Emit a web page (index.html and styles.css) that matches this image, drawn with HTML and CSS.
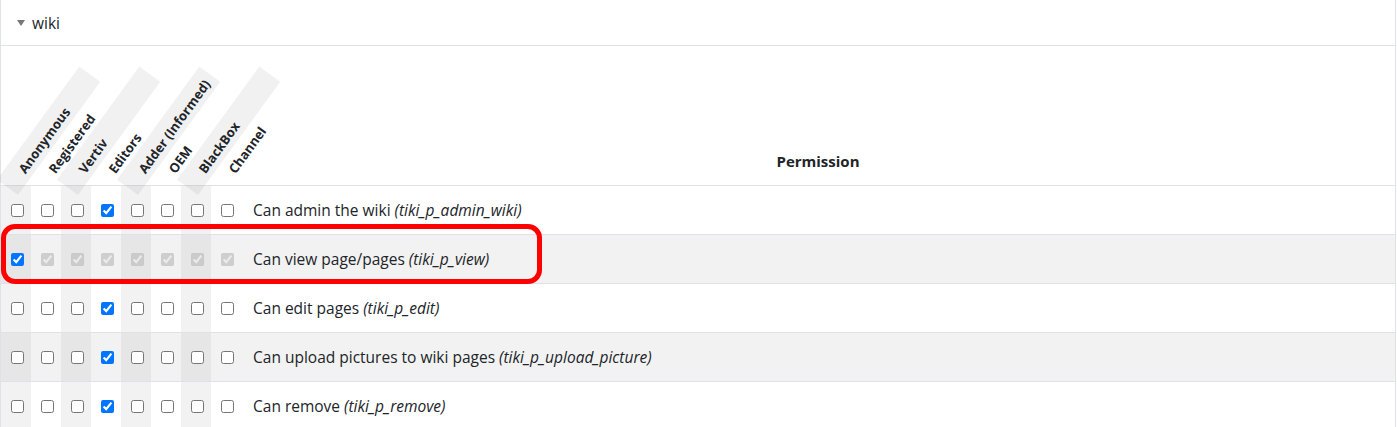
FILE: index.html
```html
<!DOCTYPE html>
<html lang="en">
<head>
<meta charset="utf-8">
<title>wiki permissions</title>
<link rel="stylesheet" href="styles.css">
</head>
<body>
<div class="panel">
  <div class="panel-head"><span class="caret"></span><span class="title">wiki</span></div>
  <table class="perms">
    <colgroup>
      <col class="c"><col class="c"><col class="c"><col class="c"><col class="c"><col class="c"><col class="c"><col class="c"><col>
    </colgroup>
    <thead>
      <tr>
        <th class="rot"><div class="stripe shaded"><span>Anonymous</span></div></th>
        <th class="rot"><div class="stripe"><span>Registered</span></div></th>
        <th class="rot"><div class="stripe shaded"><span>Vertiv</span></div></th>
        <th class="rot"><div class="stripe"><span>Editors</span></div></th>
        <th class="rot"><div class="stripe shaded"><span>Adder (Informed)</span></div></th>
        <th class="rot"><div class="stripe"><span>OEM</span></div></th>
        <th class="rot"><div class="stripe shaded"><span>BlackBox</span></div></th>
        <th class="rot"><div class="stripe"><span>Channel</span></div></th>
        <th class="perm-h">Permission</th>
      </tr>
    </thead>
    <tbody>
      <tr>
        <td class="cb shade"><input type="checkbox"></td>
        <td class="cb"><input type="checkbox"></td>
        <td class="cb shade"><input type="checkbox"></td>
        <td class="cb"><input type="checkbox" checked></td>
        <td class="cb shade"><input type="checkbox"></td>
        <td class="cb"><input type="checkbox"></td>
        <td class="cb shade"><input type="checkbox"></td>
        <td class="cb"><input type="checkbox"></td>
        <td class="label">Can admin the wiki <em>(tiki_p_admin_wiki)</em></td>
      </tr>
      <tr class="alt">
        <td class="cb shade"><input type="checkbox" checked></td>
        <td class="cb"><input type="checkbox" checked disabled></td>
        <td class="cb shade"><input type="checkbox" checked disabled></td>
        <td class="cb"><input type="checkbox" checked disabled></td>
        <td class="cb shade"><input type="checkbox" checked disabled></td>
        <td class="cb"><input type="checkbox" checked disabled></td>
        <td class="cb shade"><input type="checkbox" checked disabled></td>
        <td class="cb"><input type="checkbox" checked disabled></td>
        <td class="label">Can view page/pages <em>(tiki_p_view)</em></td>
      </tr>
      <tr>
        <td class="cb shade"><input type="checkbox"></td>
        <td class="cb"><input type="checkbox"></td>
        <td class="cb shade"><input type="checkbox"></td>
        <td class="cb"><input type="checkbox" checked></td>
        <td class="cb shade"><input type="checkbox"></td>
        <td class="cb"><input type="checkbox"></td>
        <td class="cb shade"><input type="checkbox"></td>
        <td class="cb"><input type="checkbox"></td>
        <td class="label">Can edit pages <em>(tiki_p_edit)</em></td>
      </tr>
      <tr class="alt">
        <td class="cb shade"><input type="checkbox"></td>
        <td class="cb"><input type="checkbox"></td>
        <td class="cb shade"><input type="checkbox"></td>
        <td class="cb"><input type="checkbox" checked></td>
        <td class="cb shade"><input type="checkbox"></td>
        <td class="cb"><input type="checkbox"></td>
        <td class="cb shade"><input type="checkbox"></td>
        <td class="cb"><input type="checkbox"></td>
        <td class="label">Can upload pictures to wiki pages <em>(tiki_p_upload_picture)</em></td>
      </tr>
      <tr>
        <td class="cb shade"><input type="checkbox"></td>
        <td class="cb"><input type="checkbox"></td>
        <td class="cb shade"><input type="checkbox"></td>
        <td class="cb"><input type="checkbox" checked></td>
        <td class="cb shade"><input type="checkbox"></td>
        <td class="cb"><input type="checkbox"></td>
        <td class="cb shade"><input type="checkbox"></td>
        <td class="cb"><input type="checkbox"></td>
        <td class="label">Can remove <em>(tiki_p_remove)</em></td>
      </tr>
    </tbody>
  </table>
  <div class="highlight"></div>
</div>
</body>
</html>
```

FILE: styles.css
```css
html, body {
  margin: 0;
  padding: 0;
  background: #fff;
}
body {
  font-family: "Open Sans", "Noto Sans", sans-serif;
  color: #212529;
  overflow: hidden;
}
.panel {
  position: relative;
  width: 1396px;
  box-sizing: border-box;
  border-left: 1px solid #dee2e6;
  border-right: 1px solid #dee2e6;
}
.panel-head {
  height: 45px;
  border-bottom: 1px solid #dee2e6;
  display: flex;
  align-items: center;
  padding-left: 16px;
  gap: 7px;
}
.caret {
  width: 0;
  height: 0;
  border-left: 4px solid transparent;
  border-right: 4px solid transparent;
  border-top: 6px solid #777;
  margin-top: 1px;
}
.title {
  font-size: 15.5px;
  line-height: 20px;
}
.perms {
  width: 100%;
  border-collapse: separate;
  border-spacing: 0;
  table-layout: fixed;
}
.perms col.c {
  width: 30px;
}
.perms thead tr {
  height: 139px;
}
.perms th {
  padding: 0;
}
.rot {
  position: relative;
  vertical-align: bottom;
}
.stripe {
  position: absolute;
  left: 17px;
  bottom: -10px;
  width: 140px;
  height: 26px;
  transform-origin: 0 100%;
  transform: rotate(-54deg);
  display: flex;
  align-items: center;
  padding-left: 21px;
  box-sizing: border-box;
  white-space: nowrap;
  font-size: 13px;
  font-weight: 700;
  color: #212529;
}
.stripe span {
  margin-top: 4px;
}
.stripe.shaded {
  background: rgba(0, 0, 0, 0.055);
}
.perm-h {
  vertical-align: bottom;
  text-align: center;
  font-size: 15px;
  line-height: 20px;
  font-weight: 700;
  padding-bottom: 14px !important;
}
.perms tbody tr {
  height: 49px;
}
.perms td {
  border-top: 1px solid #dee2e6;
  padding: 0;
  vertical-align: middle;
}
.cb input {
  display: block;
  margin: 0 0 0 10px;
  width: 13px;
  height: 13px;
}
.cb.shade {
  background: #f2f2f2;
}
.alt td {
  background: #f2f2f2;
}
.alt td.shade {
  background: #e6e6e6;
}
.label {
  font-size: 15.5px;
  line-height: 20px;
  padding-left: 12px !important;
  white-space: nowrap;
}
.label em {
  font-style: italic;
}
.highlight {
  position: absolute;
  left: 0;
  top: 224px;
  width: 541px;
  height: 60px;
  box-sizing: border-box;
  border: 5px solid #ff0000;
  border-radius: 14px;
}
```
